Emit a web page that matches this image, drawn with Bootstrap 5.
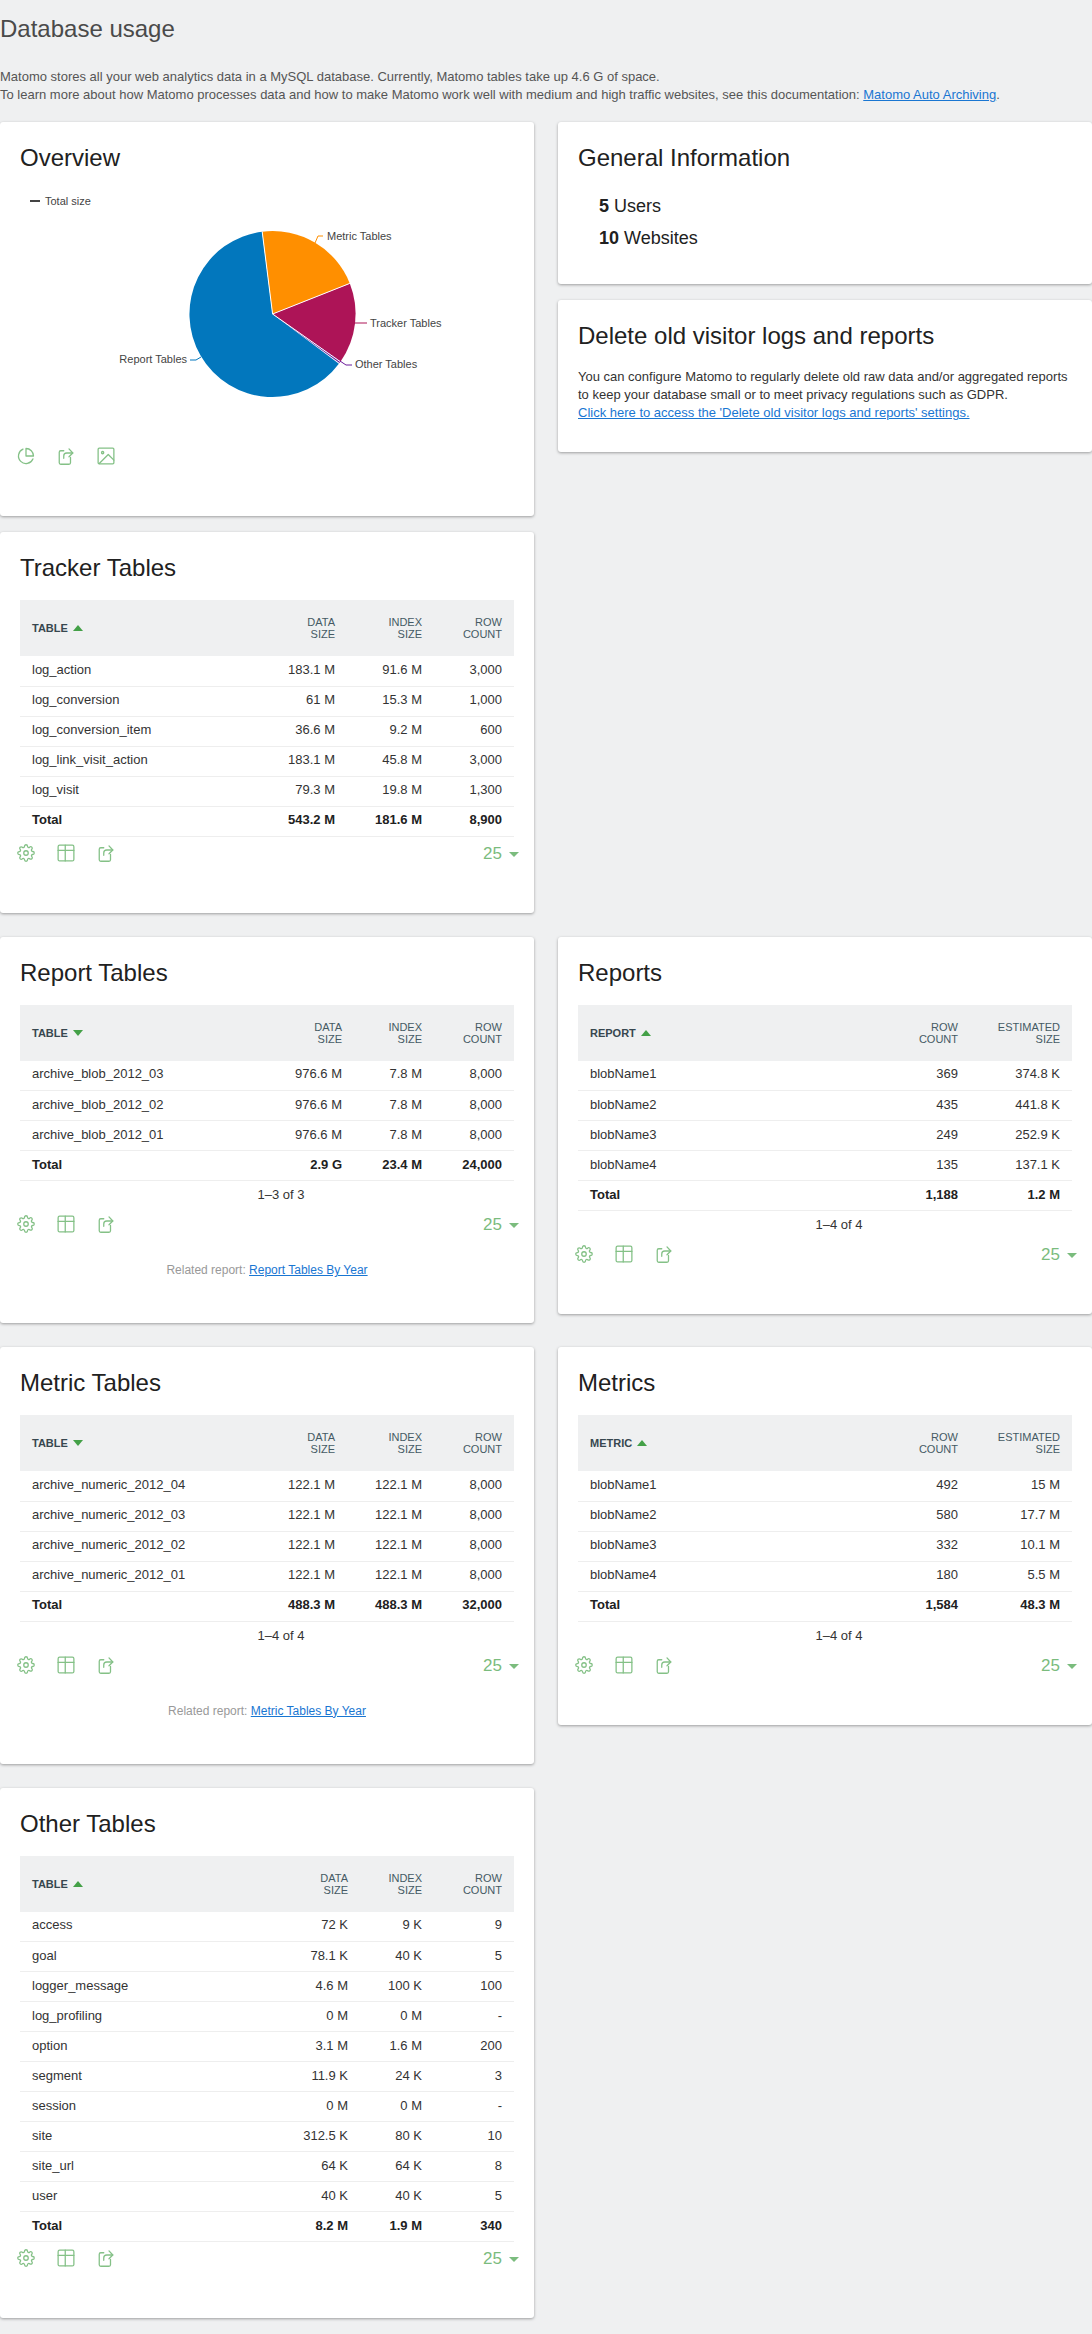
<!DOCTYPE html>
<html lang="en">
<head>
<meta charset="utf-8">
<title>Database usage</title>
<link href="https://cdn.jsdelivr.net/npm/bootstrap@5.3.0/dist/css/bootstrap.min.css" rel="stylesheet">
<style>
html,body{background:#eff0f1;}
body{font-family:"Liberation Sans",Arial,sans-serif;font-size:13px;line-height:18px;color:#444;overflow-x:hidden;}
.page-wrap{overflow:hidden;padding-bottom:17px;min-height:2334px;}
.page-title{font-size:24px;line-height:30px;font-weight:400;color:#4a4a4a;margin:0;padding-top:14px;}
.intro{margin:0;padding-top:24px;height:78px;font-size:13px;line-height:18px;color:#555;}
a.doc-link{color:#1976d2;}
.grid-row{margin-bottom:24px;}
.panel{border:0;border-radius:3px;box-shadow:0 1px 3px rgba(0,0,0,.35);background:#fff;padding:21px 20px 44px;color:#212121;}
.panel-heading{font-size:24px;line-height:30px;font-weight:400;color:#212121;margin:0 0 17px;}
.stat-list{margin:0;padding:0 0 0 21px;list-style:none;font-size:18px;line-height:32px;}
.panel-compact{padding-bottom:30px;}
.panel-stats{padding-bottom:30px;}
.panel-text{margin:0;font-size:13px;line-height:18px;color:#333;}
.chart-box{height:250px;margin:0 -20px;}
.chart-box svg{display:block;}
.chart-label{font:11px "Liberation Sans",Arial,sans-serif;fill:#444;}
.data-table{table-layout:fixed;width:100%;margin:0;font-size:13px;color:#333;}
.data-table th,.data-table td{padding:0 12px;vertical-align:middle;border-bottom:1px solid #eee;box-shadow:none;}
.data-table thead th{height:56px;background:#eff0f1;border-bottom:0;font-size:11px;line-height:12px;font-weight:400;color:#455a64;text-align:right;}
.data-table thead th.name-col{font-size:11px;font-weight:700;text-align:left;white-space:nowrap;color:#37474f;}
.data-table td{height:30px;line-height:18px;padding-bottom:2px;text-align:right;white-space:nowrap;}
.data-table td:first-child{text-align:left;}
.data-table tr.total-row td{font-weight:700;color:#212121;}
.w-87{width:87px;}.w-80{width:80px;}.w-74{width:74px;}.w-102{width:102px;}
.sort-up,.sort-down{display:inline-block;width:0;height:0;border-left:5px solid transparent;border-right:5px solid transparent;margin-left:5px;vertical-align:1px;}
.sort-up{border-bottom:6px solid #43a047;}
.sort-down{border-top:6px solid #43a047;}
.pager{height:27px;line-height:27px;padding-left:28px;text-align:center;color:#333;font-size:13px;}
.tool-row{height:32px;margin:0 -5px 0 -14px;}
.tool-icon{width:40px;height:32px;display:flex;align-items:center;justify-content:center;}
.tool-icon svg{width:18px;height:18px;fill:none;stroke:#43a047;stroke-width:1.700;stroke-linecap:round;stroke-linejoin:round;opacity:.65;}
.limit-pick{font-size:17px;color:#43a047;opacity:.7;line-height:32px;padding-top:1px;}
.limit-pick i{display:inline-block;width:0;height:0;border-left:5px solid transparent;border-right:5px solid transparent;border-top:5px solid #43a047;margin-left:7px;vertical-align:2px;}
.related{margin:21px 0 0;text-align:center;font-size:12px;line-height:18px;color:#999;}
</style>
</head>
<body>
<svg width="0" height="0" class="position-absolute">
  <symbol id="ic-gear" viewBox="0 0 24 24"><circle cx="12" cy="12" r="3"/><path d="M19.4 15a1.65 1.65 0 0 0 .33 1.82l.06.06a2 2 0 0 1 0 2.83 2 2 0 0 1-2.83 0l-.06-.06a1.65 1.65 0 0 0-1.82-.33 1.65 1.65 0 0 0-1 1.51V21a2 2 0 0 1-2 2 2 2 0 0 1-2-2v-.09A1.65 1.65 0 0 0 9 19.4a1.65 1.65 0 0 0-1.82.33l-.06.06a2 2 0 0 1-2.83 0 2 2 0 0 1 0-2.83l.06-.06a1.65 1.65 0 0 0 .33-1.82 1.65 1.65 0 0 0-1.51-1H3a2 2 0 0 1-2-2 2 2 0 0 1 2-2h.09A1.65 1.65 0 0 0 4.6 9a1.65 1.65 0 0 0-.33-1.82l-.06-.06a2 2 0 0 1 0-2.83 2 2 0 0 1 2.83 0l.06.06a1.65 1.65 0 0 0 1.82.33H9a1.65 1.65 0 0 0 1-1.51V3a2 2 0 0 1 2-2 2 2 0 0 1 2 2v.09a1.65 1.65 0 0 0 1 1.51 1.65 1.65 0 0 0 1.82-.33l.06-.06a2 2 0 0 1 2.83 0 2 2 0 0 1 0 2.83l-.06.06a1.65 1.65 0 0 0-.33 1.82V9a1.65 1.65 0 0 0 1.51 1H21a2 2 0 0 1 2 2 2 2 0 0 1-2 2h-.09a1.65 1.65 0 0 0-1.51 1z"/></symbol>
  <symbol id="ic-table" viewBox="0 0 24 24"><rect x="1.500" y="1.500" width="21" height="21" rx="2"/><path d="M1.500 8.500h21M11 1.500v21"/></symbol>
  <symbol id="ic-share" viewBox="0 0 24 24"><path d="M9 5H5a2 2 0 0 0-2 2v14a2 2 0 0 0 2 2h11a2 2 0 0 0 2-2v-7"/><path d="M9 15v-3a4 4 0 0 1 4-4h8"/><path d="M16 2.500 21 8l-5 5"/></symbol>
  <symbol id="ic-pie" viewBox="0 0 24 24"><path d="M21.210 15.890A10 10 0 1 1 8 2.830"/><path d="M22 12A10 10 0 0 0 12 2v10z"/></symbol>
  <symbol id="ic-image" viewBox="0 0 24 24"><rect x="1.500" y="1.500" width="21" height="21" rx="1.500"/><circle cx="7.500" cy="7.500" r="1.500"/><path d="M22.500 17.500 15 10 3 22"/></symbol>
</svg>

<div class="page-wrap">
  <h2 class="page-title">Database usage</h2>
  <p class="intro">Matomo stores all your web analytics data in a MySQL database. Currently, Matomo tables take up 4.6 G of space.<br>To learn more about how Matomo processes data and how to make Matomo work well with medium and high traffic websites, see this documentation: <a class="doc-link" href="#">Matomo Auto Archiving</a>.</p>

  <div class="row grid-row align-items-start">
    <div class="col-6 d-flex flex-column gap-3">
      <div class="card panel">
        <h2 class="panel-heading">Overview</h2>
        <div class="chart-box">
          <svg width="534" height="250" viewBox="0 190 534 250" role="img" aria-label="Pie chart of table sizes">
            <path d="M30 201H40" stroke="#444" stroke-width="2"/>
            <text class="chart-label" x="45" y="205">Total size</text>
            <path d="M272.600 314 262.200 231.700A83 83 0 1 0 338.900 363.800Z" fill="#0277bd"/>
            <path d="M272.600 314 262.200 231.700A83 83 0 0 1 349.800 283.400Z" fill="#ff8f00"/>
            <path d="M272.600 314 349.800 283.400A83 83 0 0 1 340.600 361.500Z" fill="#ad1457"/>
            <path d="M272.600 314 340.600 361.500 339.500 363Z" fill="#6a1b9a"/>
            <path d="M272.600 314 262.200 231.700M272.600 314 349.800 283.400M272.600 314 340 361.500" stroke="#fff" stroke-width="1" fill="none"/>
            <path d="M315 243 318 236H323" stroke="#ff8f00" fill="none"/>
            <path d="M355 323H367" stroke="#ad1457" fill="none"/>
            <path d="M340 361 346 365H352" stroke="#6a1b9a" fill="none"/>
            <path d="M201 357 196 360H190" stroke="#0277bd" fill="none"/>
            <text class="chart-label" x="327" y="240">Metric Tables</text>
            <text class="chart-label" x="370" y="327">Tracker Tables</text>
            <text class="chart-label" x="355" y="368">Other Tables</text>
            <text class="chart-label" x="187" y="363" text-anchor="end">Report Tables</text>
          </svg>
        </div>
        <div class="d-flex justify-content-between tool-row">
          <div class="d-flex">
            <a class="tool-icon" href="#"><svg><use href="#ic-pie"/></svg></a>
            <a class="tool-icon" href="#"><svg><use href="#ic-share"/></svg></a>
            <a class="tool-icon" href="#"><svg><use href="#ic-image"/></svg></a>
          </div>
        </div>
      </div>

      <div class="card panel">
        <h2 class="panel-heading">Tracker Tables</h2>
        <table class="table data-table">
          <colgroup><col><col class="w-87"><col class="w-87"><col class="w-80"></colgroup>
          <thead><tr><th class="name-col">TABLE<span class="sort-up"></span></th><th>DATA<br>SIZE</th><th>INDEX<br>SIZE</th><th>ROW<br>COUNT</th></tr></thead>
          <tbody>
            <tr><td>log_action</td><td>183.1 M</td><td>91.6 M</td><td>3,000</td></tr>
            <tr><td>log_conversion</td><td>61 M</td><td>15.3 M</td><td>1,000</td></tr>
            <tr><td>log_conversion_item</td><td>36.6 M</td><td>9.2 M</td><td>600</td></tr>
            <tr><td>log_link_visit_action</td><td>183.1 M</td><td>45.8 M</td><td>3,000</td></tr>
            <tr><td>log_visit</td><td>79.3 M</td><td>19.8 M</td><td>1,300</td></tr>
            <tr class="total-row"><td>Total</td><td>543.2 M</td><td>181.6 M</td><td>8,900</td></tr>
          </tbody>
        </table>
        <div class="d-flex justify-content-between tool-row">
          <div class="d-flex">
            <a class="tool-icon" href="#"><svg><use href="#ic-gear"/></svg></a>
            <a class="tool-icon" href="#"><svg><use href="#ic-table"/></svg></a>
            <a class="tool-icon" href="#"><svg><use href="#ic-share"/></svg></a>
          </div>
          <div class="limit-pick">25<i></i></div>
        </div>
      </div>
    </div>

    <div class="col-6 d-flex flex-column gap-3">
      <div class="card panel panel-stats">
        <h2 class="panel-heading">General Information</h2>
        <ul class="stat-list">
          <li><strong>5</strong> Users</li>
          <li><strong>10</strong> Websites</li>
        </ul>
      </div>
      <div class="card panel panel-compact">
        <h2 class="panel-heading">Delete old visitor logs and reports</h2>
        <p class="panel-text">You can configure Matomo to regularly delete old raw data and/or aggregated reports to keep your database small or to meet privacy regulations such as GDPR.<br><a class="doc-link" href="#">Click here to access the 'Delete old visitor logs and reports' settings.</a></p>
      </div>
    </div>
  </div>

  <div class="row grid-row align-items-start">
    <div class="col-6">
      <div class="card panel">
        <h2 class="panel-heading">Report Tables</h2>
        <table class="table data-table">
          <colgroup><col><col class="w-87"><col class="w-80"><col class="w-80"></colgroup>
          <thead><tr><th class="name-col">TABLE<span class="sort-down"></span></th><th>DATA<br>SIZE</th><th>INDEX<br>SIZE</th><th>ROW<br>COUNT</th></tr></thead>
          <tbody>
            <tr><td>archive_blob_2012_03</td><td>976.6 M</td><td>7.8 M</td><td>8,000</td></tr>
            <tr><td>archive_blob_2012_02</td><td>976.6 M</td><td>7.8 M</td><td>8,000</td></tr>
            <tr><td>archive_blob_2012_01</td><td>976.6 M</td><td>7.8 M</td><td>8,000</td></tr>
            <tr class="total-row"><td>Total</td><td>2.9 G</td><td>23.4 M</td><td>24,000</td></tr>
          </tbody>
        </table>
        <div class="pager">1–3 of 3</div>
        <div class="d-flex justify-content-between tool-row">
          <div class="d-flex">
            <a class="tool-icon" href="#"><svg><use href="#ic-gear"/></svg></a>
            <a class="tool-icon" href="#"><svg><use href="#ic-table"/></svg></a>
            <a class="tool-icon" href="#"><svg><use href="#ic-share"/></svg></a>
          </div>
          <div class="limit-pick">25<i></i></div>
        </div>
        <p class="related">Related report: <a class="doc-link" href="#">Report Tables By Year</a></p>
      </div>
    </div>
    <div class="col-6">
      <div class="card panel">
        <h2 class="panel-heading">Reports</h2>
        <table class="table data-table">
          <colgroup><col><col class="w-87"><col class="w-102"></colgroup>
          <thead><tr><th class="name-col">REPORT<span class="sort-up"></span></th><th>ROW<br>COUNT</th><th>ESTIMATED<br>SIZE</th></tr></thead>
          <tbody>
            <tr><td>blobName1</td><td>369</td><td>374.8 K</td></tr>
            <tr><td>blobName2</td><td>435</td><td>441.8 K</td></tr>
            <tr><td>blobName3</td><td>249</td><td>252.9 K</td></tr>
            <tr><td>blobName4</td><td>135</td><td>137.1 K</td></tr>
            <tr class="total-row"><td>Total</td><td>1,188</td><td>1.2 M</td></tr>
          </tbody>
        </table>
        <div class="pager">1–4 of 4</div>
        <div class="d-flex justify-content-between tool-row">
          <div class="d-flex">
            <a class="tool-icon" href="#"><svg><use href="#ic-gear"/></svg></a>
            <a class="tool-icon" href="#"><svg><use href="#ic-table"/></svg></a>
            <a class="tool-icon" href="#"><svg><use href="#ic-share"/></svg></a>
          </div>
          <div class="limit-pick">25<i></i></div>
        </div>
      </div>
    </div>
  </div>

  <div class="row grid-row align-items-start">
    <div class="col-6">
      <div class="card panel">
        <h2 class="panel-heading">Metric Tables</h2>
        <table class="table data-table">
          <colgroup><col><col class="w-87"><col class="w-87"><col class="w-80"></colgroup>
          <thead><tr><th class="name-col">TABLE<span class="sort-down"></span></th><th>DATA<br>SIZE</th><th>INDEX<br>SIZE</th><th>ROW<br>COUNT</th></tr></thead>
          <tbody>
            <tr><td>archive_numeric_2012_04</td><td>122.1 M</td><td>122.1 M</td><td>8,000</td></tr>
            <tr><td>archive_numeric_2012_03</td><td>122.1 M</td><td>122.1 M</td><td>8,000</td></tr>
            <tr><td>archive_numeric_2012_02</td><td>122.1 M</td><td>122.1 M</td><td>8,000</td></tr>
            <tr><td>archive_numeric_2012_01</td><td>122.1 M</td><td>122.1 M</td><td>8,000</td></tr>
            <tr class="total-row"><td>Total</td><td>488.3 M</td><td>488.3 M</td><td>32,000</td></tr>
          </tbody>
        </table>
        <div class="pager">1–4 of 4</div>
        <div class="d-flex justify-content-between tool-row">
          <div class="d-flex">
            <a class="tool-icon" href="#"><svg><use href="#ic-gear"/></svg></a>
            <a class="tool-icon" href="#"><svg><use href="#ic-table"/></svg></a>
            <a class="tool-icon" href="#"><svg><use href="#ic-share"/></svg></a>
          </div>
          <div class="limit-pick">25<i></i></div>
        </div>
        <p class="related">Related report: <a class="doc-link" href="#">Metric Tables By Year</a></p>
      </div>
    </div>
    <div class="col-6">
      <div class="card panel">
        <h2 class="panel-heading">Metrics</h2>
        <table class="table data-table">
          <colgroup><col><col class="w-87"><col class="w-102"></colgroup>
          <thead><tr><th class="name-col">METRIC<span class="sort-up"></span></th><th>ROW<br>COUNT</th><th>ESTIMATED<br>SIZE</th></tr></thead>
          <tbody>
            <tr><td>blobName1</td><td>492</td><td>15 M</td></tr>
            <tr><td>blobName2</td><td>580</td><td>17.7 M</td></tr>
            <tr><td>blobName3</td><td>332</td><td>10.1 M</td></tr>
            <tr><td>blobName4</td><td>180</td><td>5.5 M</td></tr>
            <tr class="total-row"><td>Total</td><td>1,584</td><td>48.3 M</td></tr>
          </tbody>
        </table>
        <div class="pager">1–4 of 4</div>
        <div class="d-flex justify-content-between tool-row">
          <div class="d-flex">
            <a class="tool-icon" href="#"><svg><use href="#ic-gear"/></svg></a>
            <a class="tool-icon" href="#"><svg><use href="#ic-table"/></svg></a>
            <a class="tool-icon" href="#"><svg><use href="#ic-share"/></svg></a>
          </div>
          <div class="limit-pick">25<i></i></div>
        </div>
      </div>
    </div>
  </div>

  <div class="row grid-row align-items-start">
    <div class="col-6">
      <div class="card panel">
        <h2 class="panel-heading">Other Tables</h2>
        <table class="table data-table">
          <colgroup><col><col class="w-87"><col class="w-74"><col class="w-80"></colgroup>
          <thead><tr><th class="name-col">TABLE<span class="sort-up"></span></th><th>DATA<br>SIZE</th><th>INDEX<br>SIZE</th><th>ROW<br>COUNT</th></tr></thead>
          <tbody>
            <tr><td>access</td><td>72 K</td><td>9 K</td><td>9</td></tr>
            <tr><td>goal</td><td>78.1 K</td><td>40 K</td><td>5</td></tr>
            <tr><td>logger_message</td><td>4.6 M</td><td>100 K</td><td>100</td></tr>
            <tr><td>log_profiling</td><td>0 M</td><td>0 M</td><td>-</td></tr>
            <tr><td>option</td><td>3.1 M</td><td>1.6 M</td><td>200</td></tr>
            <tr><td>segment</td><td>11.9 K</td><td>24 K</td><td>3</td></tr>
            <tr><td>session</td><td>0 M</td><td>0 M</td><td>-</td></tr>
            <tr><td>site</td><td>312.5 K</td><td>80 K</td><td>10</td></tr>
            <tr><td>site_url</td><td>64 K</td><td>64 K</td><td>8</td></tr>
            <tr><td>user</td><td>40 K</td><td>40 K</td><td>5</td></tr>
            <tr class="total-row"><td>Total</td><td>8.2 M</td><td>1.9 M</td><td>340</td></tr>
          </tbody>
        </table>
        <div class="d-flex justify-content-between tool-row">
          <div class="d-flex">
            <a class="tool-icon" href="#"><svg><use href="#ic-gear"/></svg></a>
            <a class="tool-icon" href="#"><svg><use href="#ic-table"/></svg></a>
            <a class="tool-icon" href="#"><svg><use href="#ic-share"/></svg></a>
          </div>
          <div class="limit-pick">25<i></i></div>
        </div>
      </div>
    </div>
  </div>
</div>
<script src="https://cdn.jsdelivr.net/npm/bootstrap@5.3.0/dist/js/bootstrap.bundle.min.js"></script>
</body>
</html>
